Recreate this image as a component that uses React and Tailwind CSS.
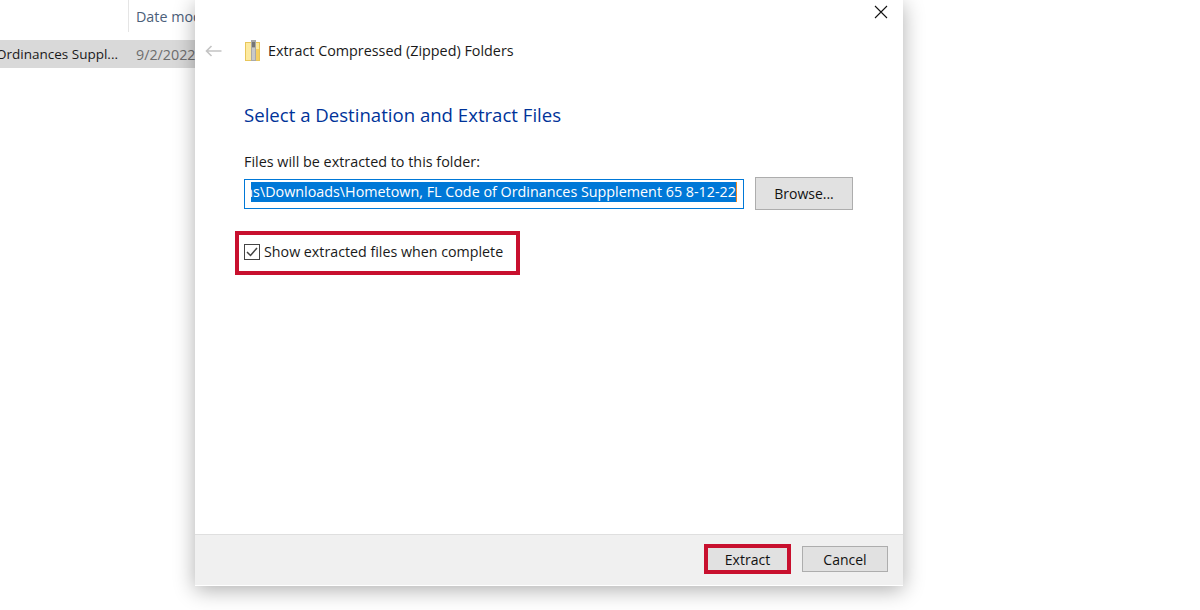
const font = { fontFamily: '"Open Sans", "Noto Sans", sans-serif' };

function ZipIcon() {
  return (
    <svg width="15" height="21" viewBox="0 0 15 21" className="shrink-0">
      <rect x="0.5" y="2.5" width="14" height="18" fill="#fdeaa0" stroke="#e8c65a" />
      <rect x="10" y="9" width="4" height="11" fill="#f5cf62" />
      <rect x="6" y="0" width="5" height="21" fill="#a9a9a9" />
      <path d="M7 9h3M7 11h3M7 13h3M7 15h3M7 17h3M7 19h3" stroke="#e8e8e8" strokeWidth="1" />
      <rect x="7" y="2" width="3" height="5" fill="#757575" />
    </svg>
  );
}

function Button({ children, className = "" }) {
  return (
    <div className={`flex items-center justify-center bg-[#e1e1e1] text-[14px] text-[#111] ${className}`}>
      {children}
    </div>
  );
}

export default function App() {
  return (
    <div className="flex h-[610px] w-[1200px] overflow-hidden bg-white" style={font}>
      <div className="flex w-[195px] shrink-0 flex-col overflow-hidden">
        <div className="flex h-[32px] shrink-0">
          <div className="w-[129px] shrink-0 border-r border-[#e5e5e5]" />
          <div className="shrink-0 whitespace-nowrap pl-[7px] pt-[6px] text-[14.3px] leading-[22px] text-[#4c607a]">Date modified</div>
        </div>
        <div className="mt-[8px] flex h-[28px] shrink-0 items-center overflow-hidden whitespace-nowrap bg-[#d9d9d9] pt-[1px] text-[14.3px]">
          <div className="ml-[-4px] w-[140px] shrink-0 text-[13.5px] text-[#1a1a1a]">Ordinances Suppl...</div>
          <div className="shrink-0 text-[#6d6d6d]">9/2/2022 1:16 PM</div>
        </div>
      </div>

      <div className="z-10 flex h-[586px] w-[708px] shrink-0 flex-col bg-white shadow-[0_4px_20px_rgba(0,0,0,0.32)]">
        <div className="flex h-[24px] shrink-0 items-center justify-end pr-[15px]">
          <svg width="14" height="14" viewBox="0 0 14 14">
            <path d="M1 1l12 12M13 1L1 13" stroke="#111" strokeWidth="1.1" />
          </svg>
        </div>
        <div className="mt-[16px] flex h-[21px] shrink-0 items-center pl-[10px]">
          <svg width="17" height="12" viewBox="0 0 17 12" className="shrink-0">
            <path d="M16.5 6H1.5M6.5 1L1.5 6l5 5" fill="none" stroke="#c4c4c4" strokeWidth="1.6" />
          </svg>
          <div className="ml-[23px]"><ZipIcon /></div>
          <div className="ml-[8px] text-[14.35px] leading-[20px] text-[#1a1a1a]">Extract Compressed (Zipped) Folders</div>
        </div>
        <div className="mt-[40px] pl-[49px] text-[18.6px] leading-[28px] text-[#003399]">Select a Destination and Extract Files</div>
        <div className="mt-[23px] pl-[49px] text-[14.36px] leading-[20px] text-[#1a1a1a]">Files will be extracted to this folder:</div>
        <div className="mt-[5px] flex h-[33px] items-start pl-[49px]">
          <div className="mt-[2px] h-[30px] w-[500px] border border-[#0078d7] px-[6px] pt-[2px]">
            <div className="flex h-[20px] w-full justify-end overflow-hidden whitespace-nowrap border-r border-[#f08a24] bg-[#0078d7] text-[14.33px] leading-[20px] text-white">
              <span className="shrink-0">ns\Downloads\Hometown, FL Code of Ordinances Supplement 65 8-12-22</span>
            </div>
          </div>
          <Button className="ml-[11px] h-[33px] w-[98px] border border-[#adadad]">Browse...</Button>
        </div>
        <div className="ml-[40px] mt-[21px] flex h-[44px] w-[285px] items-center border-4 border-[#c8102e] pb-[2px] pl-[5px]">
          <div className="flex h-[16px] w-[16px] shrink-0 items-center justify-center border border-[#444]">
            <svg width="12" height="10" viewBox="0 0 12 10">
              <path d="M1 5l3.5 3.5L11 1" fill="none" stroke="#444" strokeWidth="1.5" />
            </svg>
          </div>
          <div className="ml-[4px] whitespace-nowrap text-[14.25px] text-[#1a1a1a]">Show extracted files when complete</div>
        </div>
        <div className="grow" />
        <div className="flex h-[52px] shrink-0 items-center justify-end gap-[11px] border-t border-b border-t-[#dfdfdf] border-b-white bg-[#f0f0f0] pb-[2px] pr-[15px]">
          <Button className="h-[30px] w-[87px] border-4 border-[#c8102e] pt-[1px]">Extract</Button>
          <Button className="h-[26px] w-[86px] border border-[#adadad] pt-[1px]">Cancel</Button>
        </div>
      </div>
      <div className="grow" />
    </div>
  );
}
